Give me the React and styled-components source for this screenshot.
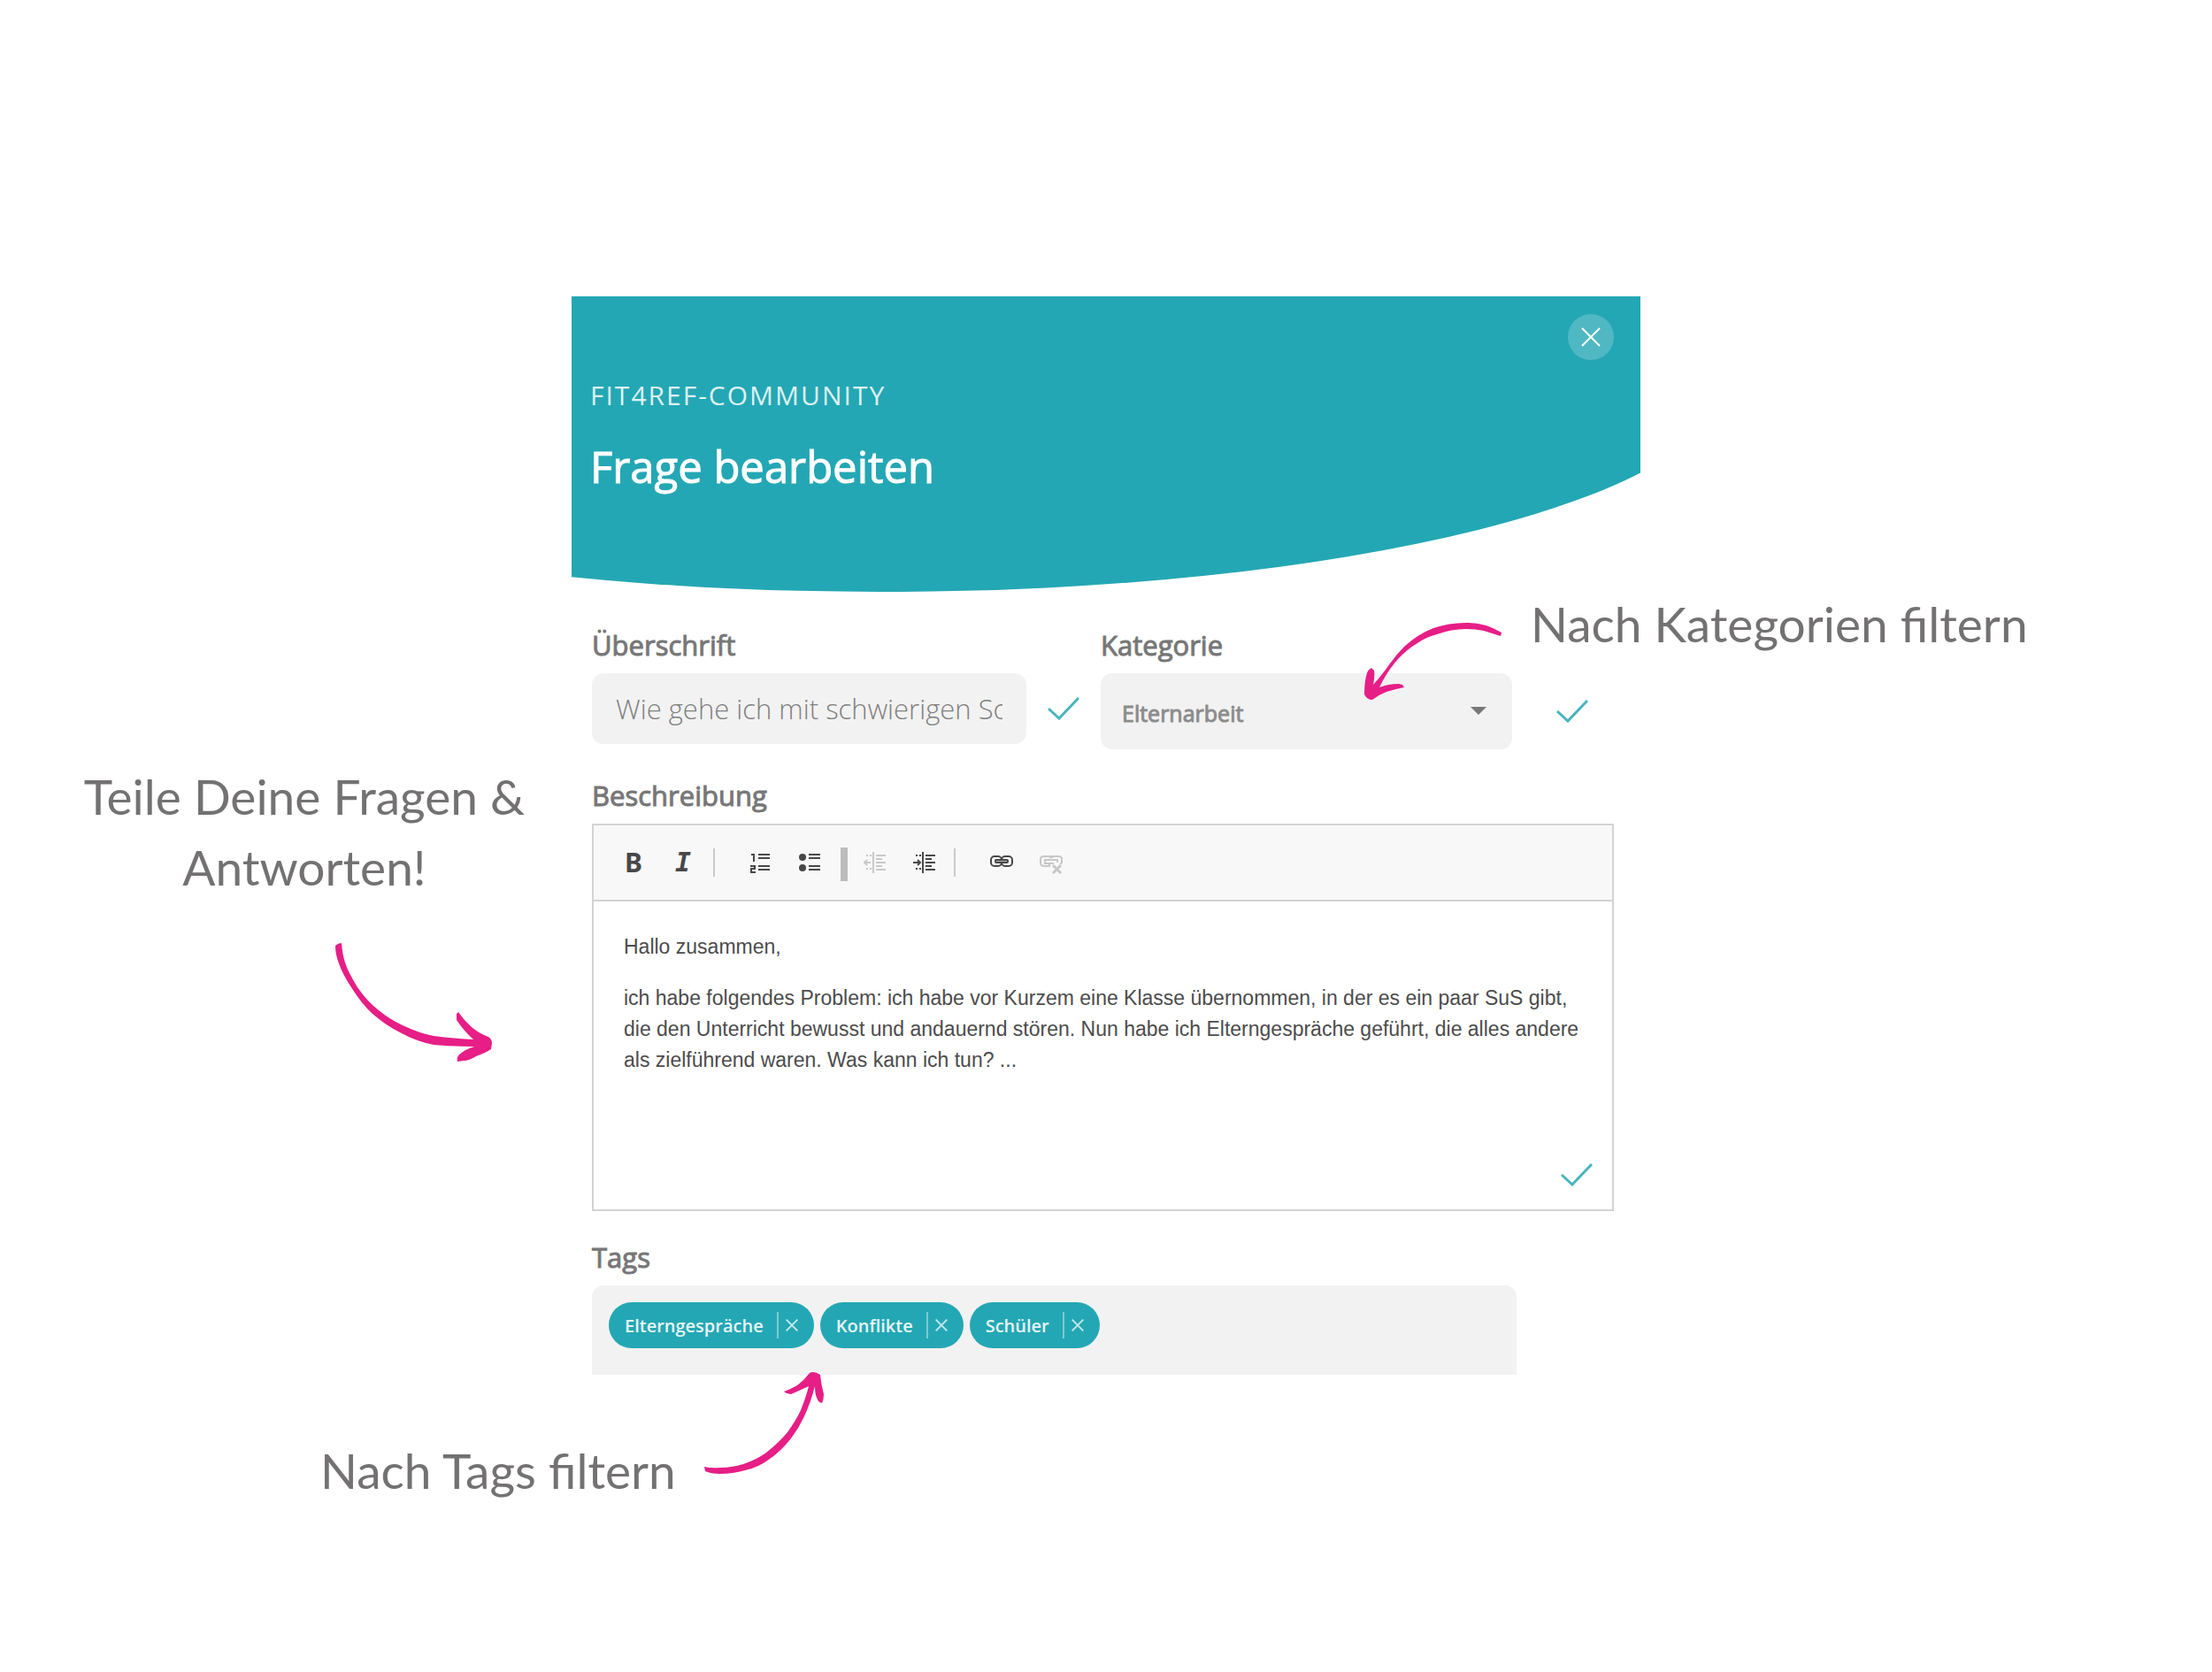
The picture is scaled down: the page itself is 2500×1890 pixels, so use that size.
// App.jsx
import React from 'react';
import styled, { createGlobalStyle, css } from 'styled-components';

const teal = '#24a7b4';
const pink = '#e61e86';

function Check() {
  return (
    <svg width="36" height="26" viewBox="0 0 36 26" fill="none" stroke="#47b4be" strokeWidth="3" aria-hidden="true">
      <path d="M1 13 L13 24 L35 1" />
    </svg>
  );
}

function Cross({ size, stroke }) {
  return (
    <svg width={size} height={size} viewBox="0 0 22 22" fill="none" stroke="currentColor" strokeWidth={stroke} aria-hidden="true">
      <path d="M1 1 L21 21 M21 1 L1 21" />
    </svg>
  );
}

const icons = {
  numbered: (
    <>
      <path d="M2 4 H5 V12" strokeWidth="2" />
      <path d="M1 17 H6 V20 H2 V24 H7" strokeWidth="2" />
      <path d="M10 4 H23 M10 8 H23 M10 17 H23 M10 21 H23" strokeWidth="2" />
    </>
  ),
  bulleted: (
    <>
      <circle cx="4" cy="7" r="4" fill="currentColor" stroke="none" />
      <circle cx="4" cy="19" r="4" fill="currentColor" stroke="none" />
      <path d="M11 4 H24 M11 8 H24 M11 17 H24 M11 21 H24" strokeWidth="2" />
    </>
  ),
  outdent: (
    <>
      <path d="M12 1 V25" strokeWidth="2" />
      <path d="M4 5 H10 M4 20 H10" strokeWidth="2" strokeDasharray="2 2" />
      <path d="M2 13 H9 M5 10 L2 13 L5 16" strokeWidth="2" />
      <path d="M15 5 H26 M15 9 H22 M15 13 H26 M15 17 H22 M15 21 H26" strokeWidth="2" />
    </>
  ),
  indent: (
    <>
      <path d="M12 1 V25" strokeWidth="2" />
      <path d="M4 5 H10 M4 20 H10" strokeWidth="2" strokeDasharray="2 2" />
      <path d="M1 13 H9 M6 10 L9 13 L6 16" strokeWidth="2" />
      <path d="M15 5 H26 M15 9 H22 M15 13 H26 M15 17 H22 M15 21 H26" strokeWidth="2" />
    </>
  ),
  link: (
    <>
      <rect x="1" y="6" width="12" height="11" rx="4" strokeWidth="2" />
      <rect x="13" y="6" width="12" height="11" rx="4" strokeWidth="2" />
      <rect x="6" y="10" width="14" height="3" rx="1" fill="#b8b8b8" strokeWidth="2" />
    </>
  ),
  unlink: (
    <>
      <path d="M12 8 V6 H5 Q1 6 1 9 V13 Q1 17 5 17 H11 V14" strokeWidth="2" />
      <path d="M14 8 V6 H21 Q25 6 25 9 V13 L23 15" strokeWidth="2" />
      <path d="M16 14 H6 V10 H20 V13" strokeWidth="2" />
      <path d="M15 16 L24 25 M24 16 L15 25" strokeWidth="3" />
    </>
  ),
};

function ToolIcon({ name }) {
  return (
    <svg width="26" height="26" viewBox="0 0 26 26" fill="none" stroke="currentColor" aria-hidden="true">
      {icons[name]}
    </svg>
  );
}

const tags = ['Elterngespräche', 'Konflikte', 'Schüler'];

function App() {
  return (
    <>
      <GlobalStyle />
      <Page>
        <Aside>
          <Note>
            Teile Deine Fragen &amp;
            <br />
            Antworten!
          </Note>
          <ShareArrow viewBox="378 1066 180 136" aria-hidden="true">
            <path d="M379 1070 Q382 1067 386 1067 Q387 1080 390 1089 Q393 1099 404 1117 Q415 1133 428 1143 Q440 1153 455 1160 Q474 1169 490 1172 Q512 1175 535 1176 Q524 1166 516 1154 V1147 L518 1145 Q524 1154 533 1162 Q541 1169 552 1173 Q556 1176 556 1180 L555 1187 Q549 1191 538 1195 Q530 1200 524 1200 L517 1201 Q516 1196 519 1193 Q526 1187 536 1184 Q510 1184 490 1182 Q470 1178 452 1168 Q436 1160 421 1147 Q408 1135 397 1117 Q387 1102 383 1090 Q379 1080 379 1070 Z" />
          </ShareArrow>
        </Aside>

        <Dialog role="dialog" aria-labelledby="title">
          <Header>
            <Eyebrow>FIT4REF-COMMUNITY</Eyebrow>
            <Title id="title">Frage bearbeiten</Title>
            <CloseButton type="button" aria-label="Schließen">
              <Cross size="22" stroke="2" />
            </CloseButton>
          </Header>

          <Form>
            <Row>
              <Field>
                <Label htmlFor="headline">Überschrift</Label>
                <Control>
                  <TextInput id="headline" defaultValue="Wie gehe ich mit schwierigen Schülern um?" />
                  <Status $width="84px" $inset="24px">
                    <Check />
                  </Status>
                </Control>
              </Field>
              <Field>
                <Label htmlFor="category">Kategorie</Label>
                <Control>
                  <SelectBox>
                    <Select id="category" defaultValue="Elternarbeit">
                      <option>Elternarbeit</option>
                    </Select>
                    <Caret viewBox="0 0 18 9" aria-hidden="true">
                      <path d="M0 0 H18 L9 9 Z" />
                    </Caret>
                  </SelectBox>
                  <Status $width="115px" $inset="29px">
                    <Check />
                  </Status>
                </Control>
                <CategoryNote>
                  <CategoryArrow viewBox="1541 704 158 90" aria-hidden="true">
                    <path d="M1697 717 Q1677 705 1657 706 Q1637 706 1620 712 Q1602 719 1587 733 Q1578 742 1571 752 Q1562 765 1552 776 Q1554 766 1553 760 L1550 757 Q1546 759 1545 763 Q1542 772 1542 787 Q1545 793 1551 793 Q1559 787 1567 784 Q1576 781 1587 779 L1585 776 L1581 775 Q1569 775 1559 779 Q1567 762 1579 748 Q1590 736 1602 729 Q1612 722 1624 719 Q1640 713 1657 713 Q1668 713 1677 715 L1696 721 Z" />
                  </CategoryArrow>
                  <Note>Nach Kategorien filtern</Note>
                </CategoryNote>
              </Field>
            </Row>

            <Field>
              <Label as="span" id="description">Beschreibung</Label>
              <Editor>
                <Toolbar role="toolbar" aria-label="Formatierung">
                  <ToolButton type="button" aria-label="Fett">
                    <BoldGlyph>B</BoldGlyph>
                  </ToolButton>
                  <ToolButton type="button" aria-label="Kursiv">
                    <ItalicGlyph>I</ItalicGlyph>
                  </ToolButton>
                  <Divider />
                  <ToolButton type="button" aria-label="Nummerierte Liste">
                    <ToolIcon name="numbered" />
                  </ToolButton>
                  <ToolButton type="button" aria-label="Liste">
                    <ToolIcon name="bulleted" />
                  </ToolButton>
                  <Divider $thick />
                  <ToolButton type="button" aria-label="Einzug verkleinern" disabled>
                    <ToolIcon name="outdent" />
                  </ToolButton>
                  <ToolButton type="button" aria-label="Einzug vergrößern">
                    <ToolIcon name="indent" />
                  </ToolButton>
                  <Divider />
                  <ToolButton type="button" aria-label="Link einfügen">
                    <ToolIcon name="link" />
                  </ToolButton>
                  <ToolButton type="button" aria-label="Link entfernen" disabled>
                    <ToolIcon name="unlink" />
                  </ToolButton>
                </Toolbar>
                <EditorBody
                  contentEditable
                  suppressContentEditableWarning
                  spellCheck={false}
                  role="textbox"
                  aria-multiline="true"
                  aria-labelledby="description"
                >
                  <p>Hallo zusammen,</p>
                  <p>
                    ich habe folgendes Problem: ich habe vor Kurzem eine Klasse übernommen, in der es ein paar SuS
                    gibt, die den Unterricht bewusst und andauernd stören. Nun habe ich Elterngespräche geführt, die
                    alles andere als zielführend waren. Was kann ich tun? ...
                  </p>
                </EditorBody>
                <EditorFooter>
                  <Check />
                </EditorFooter>
              </Editor>
            </Field>

            <Field>
              <Label as="span" id="tags">Tags</Label>
              <TagBox aria-labelledby="tags">
                {tags.map((tag) => (
                  <Tag key={tag}>
                    {tag}
                    <RemoveButton type="button" aria-label={`${tag} entfernen`}>
                      <Cross size="14" stroke="3" />
                    </RemoveButton>
                  </Tag>
                ))}
              </TagBox>
              <TagNote>
                <Note>Nach Tags filtern</Note>
                <TagArrow viewBox="795 1551 138 118" aria-hidden="true">
                  <path d="M796 1659 Q804 1661 814 1660 Q827 1660 840 1656 Q855 1651 866 1643 Q880 1632 890 1620 Q900 1606 905 1595 Q911 1580 914 1568 Q905 1572 894 1577 L889 1576 L886 1574 Q894 1571 901 1567 Q909 1561 915 1553 Q920 1550 927 1555 Q928 1566 931 1577 Q931 1583 929 1587 Q925 1586 924 1583 Q921 1578 921 1568 Q916 1587 909 1602 Q903 1615 894 1627 Q882 1642 870 1650 Q857 1660 842 1663 Q828 1667 814 1667 Q803 1667 797 1664 Z" />
                </TagArrow>
              </TagNote>
            </Field>
          </Form>
        </Dialog>
      </Page>
    </>
  );
}

const GlobalStyle = createGlobalStyle`
  *, *::before, *::after {
    box-sizing: border-box;
  }

  body {
    margin: 0;
    background: #fff;
    font-family: 'Open Sans', sans-serif;
  }

  h1, p, ul {
    margin: 0;
    padding: 0;
  }

  button {
    padding: 0;
    border: 0;
    background: none;
    cursor: pointer;
  }

  svg {
    display: block;
  }
`;

const Page = styled.main`
  display: grid;
  grid-template-columns: minmax(0, 1fr) minmax(0, 1208px) minmax(0, 1fr);
  min-height: 100vh;
  padding: 335px 0;
`;

const Aside = styled.aside`
  display: flex;
  flex-direction: column;
  align-items: center;
  gap: 45px;
  padding: 525px 42px 0 84px;
`;

const Note = styled.p`
  color: #737171;
  font-family: Lato, sans-serif;
  font-size: 55px;
  line-height: 80px;
  text-align: center;
  white-space: nowrap;
`;

const ShareArrow = styled.svg`
  width: 180px;
  margin-left: 248px;
  fill: ${pink};
`;

const Dialog = styled.section`
  grid-column: 2;
  min-width: 0;
`;

const Header = styled.header`
  position: relative;
  overflow: hidden;
  padding: 92px 21px 108px;
  color: #fff;

  &::before {
    content: '';
    position: absolute;
    z-index: -1;
    top: 0;
    bottom: 0;
    left: -50%;
    width: 158%;
    background: ${teal};
    border-radius: 0 0 50% 50% / 0 0 240px 240px;
  }
`;

const Eyebrow = styled.p`
  margin-bottom: 26px;
  color: rgba(255, 255, 255, 0.85);
  font-size: 30px;
  line-height: 40px;
  letter-spacing: 2px;
`;

const Title = styled.h1`
  font-size: 49px;
  font-weight: 400;
  line-height: 68px;
  -webkit-text-stroke: 1px currentColor;
`;

const CloseButton = styled.button`
  position: absolute;
  top: 20px;
  right: 30px;
  display: flex;
  align-items: center;
  justify-content: center;
  width: 52px;
  height: 52px;
  border-radius: 50%;
  background: rgba(255, 255, 255, 0.2);
  color: #fff;
`;

const Form = styled.form`
  display: flex;
  flex-direction: column;
  gap: 30px;
  padding: 38px 30px 0 23px;
`;

const Row = styled.div`
  display: grid;
  grid-template-columns: 575fr 580fr;
`;

const Field = styled.div`
  position: relative;
  display: flex;
  flex-direction: column;
  gap: 10px;
  min-width: 0;
`;

const Label = styled.label`
  color: #777;
  font-size: 31px;
  line-height: 44px;
  -webkit-text-stroke: 1px currentColor;
`;

const Control = styled.div`
  display: flex;
  align-items: center;
`;

const controlStyle = css`
  width: 100%;
  border: 0;
  border-radius: 13px;
  background: #f2f2f2;
  font-family: inherit;
  outline: 0;
`;

const TextInput = styled.input`
  ${controlStyle}
  flex: 1;
  min-width: 0;
  height: 80px;
  padding: 0 27px;
  color: #808080;
  font-size: 31px;
  font-weight: 300;
`;

const SelectBox = styled.div`
  position: relative;
  flex: 1;
  min-width: 0;
`;

const Select = styled.select`
  ${controlStyle}
  display: block;
  height: 86px;
  padding: 4px 60px 0 24px;
  appearance: none;
  color: #8c8c8c;
  font-size: 25px;
  font-weight: 400;
  -webkit-text-stroke: 1px currentColor;
`;

const Caret = styled.svg`
  position: absolute;
  top: 38px;
  right: 29px;
  width: 18px;
  fill: #777;
  pointer-events: none;
`;

const Status = styled.div`
  display: flex;
  flex: none;
  justify-content: flex-end;
  width: ${({ $width }) => $width};
  padding-right: ${({ $inset }) => $inset};
`;

const Editor = styled.div`
  border: 2px solid #d3d3d3;
`;

const Toolbar = styled.div`
  display: flex;
  align-items: center;
  height: 86px;
  padding: 0 17px;
  border-bottom: 2px solid #d3d3d3;
  background: #f8f8f8;
`;

const ToolButton = styled.button`
  display: flex;
  align-items: center;
  justify-content: center;
  width: 56px;
  height: 56px;
  color: #484848;

  &:disabled {
    color: #c8c8c8;
  }
`;

const BoldGlyph = styled.b`
  font-family: 'Noto Sans', sans-serif;
  font-size: 30px;
  font-weight: 700;
  line-height: 40px;
`;

const ItalicGlyph = styled.i`
  font-family: 'DejaVu Sans Mono', monospace;
  font-size: 30px;
  font-weight: 700;
  line-height: 40px;
`;

const Divider = styled.span`
  width: ${({ $thick }) => ($thick ? '8px' : '2px')};
  height: ${({ $thick }) => ($thick ? '38px' : '32px')};
  margin: ${({ $thick }) => ($thick ? '4px 2px 0 6px' : '0 24px 0 6px')};
  background: ${({ $thick }) => ($thick ? '#bcbcbc' : '#cacaca')};
`;

const EditorBody = styled.div`
  min-height: 296px;
  padding: 34px 34px 0;
  color: #4c4c4c;
  font-family: 'Liberation Sans', Arial, sans-serif;
  font-size: 23px;
  line-height: 35px;
  outline: 0;

  p + p {
    margin-top: 23px;
  }
`;

const EditorFooter = styled.div`
  display: flex;
  justify-content: flex-end;
  padding: 0 22px 26px;
`;

const TagBox = styled.ul`
  display: flex;
  flex-wrap: wrap;
  gap: 7px;
  margin-right: 110px;
  padding: 19px 19px 30px;
  border-radius: 13px 13px 0 0;
  background: #f2f2f2;
  list-style: none;
`;

const Tag = styled.li`
  display: flex;
  align-items: center;
  gap: 15px;
  height: 52px;
  padding: 0 18px;
  border-radius: 26px;
  background: ${teal};
  color: #e6f6f7;
  font-size: 20px;
  font-weight: 600;
`;

const RemoveButton = styled.button`
  height: 30px;
  padding-left: 8px;
  border-left: 2px solid #7ccbd2;
  color: #c5e8eb;
`;

const CategoryNote = styled.div`
  position: absolute;
  top: -42px;
  left: 297px;
  display: flex;
  gap: 31px;
  pointer-events: none;
`;

const CategoryArrow = styled.svg`
  flex: none;
  width: 158px;
  margin-top: 37px;
  fill: ${pink};
`;

const TagNote = styled.div`
  position: absolute;
  top: 151px;
  left: -307px;
  display: flex;
  align-items: flex-end;
  gap: 31px;
  pointer-events: none;
`;

const TagArrow = styled.svg`
  flex: none;
  width: 138px;
  margin-bottom: 34px;
  fill: ${pink};
`;

export default App;
